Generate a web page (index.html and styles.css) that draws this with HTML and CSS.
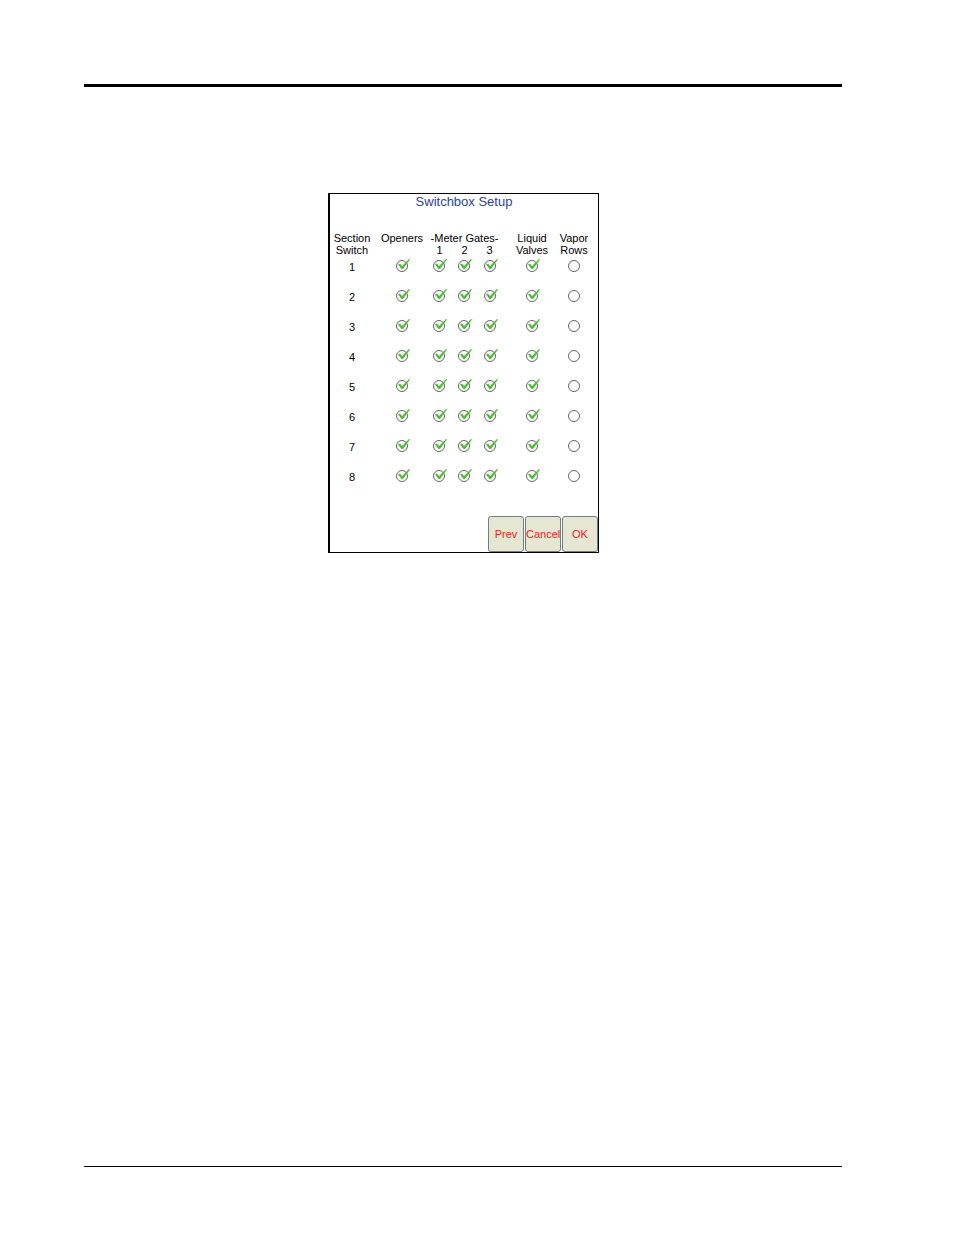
FILE: index.html
```
<!DOCTYPE html>
<html lang="en">
<head>
<meta charset="utf-8">
<title>Switchbox Setup</title>
<link rel="stylesheet" href="styles.css">
</head>
<body>
<div class="page">
  <header class="page-header"></header>
  <main class="page-body">
    <form class="panel">
      <h1 class="panel-title">Switchbox Setup</h1>
      <table class="switches">
        <colgroup>
          <col class="col-section"><col class="col-openers"><col class="col-gate"><col class="col-gate"><col class="col-gate"><col class="col-liquid"><col class="col-vapor">
        </colgroup>
        <thead>
          <tr>
            <th class="section" rowspan="2">Section<br>Switch</th>
            <th rowspan="2">Openers</th>
            <th colspan="3">-Meter Gates-</th>
            <th class="liquid" rowspan="2">Liquid<br>Valves</th>
            <th rowspan="2">Vapor<br>Rows</th>
          </tr>
          <tr><th>1</th><th>2</th><th>3</th></tr>
        </thead>
        <tbody id="rows"></tbody>
      </table>
      <div class="actions">
        <button class="action" type="button">Prev</button>
        <button class="action" type="button">Cancel</button>
        <button class="action" type="button">OK</button>
      </div>
    </form>
  </main>
  <footer class="page-footer"></footer>
</div>
<script src="rows.js"></script>
</body>
</html>
```
FILE: rows.js
```
const columns = ["Openers", "Meter gate 1", "Meter gate 2", "Meter gate 3", "Liquid valves", "Vapor rows"];
const body = document.getElementById("rows");

for (let section = 1; section <= 8; section++) {
  const row = body.insertRow();
  const head = document.createElement("th");
  head.scope = "row";
  head.className = "section";
  head.textContent = section;
  row.append(head);
  columns.forEach((name) => {
    const cell = row.insertCell();
    if (name === "Liquid valves") cell.className = "liquid";
    const box = document.createElement("input");
    box.type = "checkbox";
    box.className = "tick";
    box.defaultChecked = name !== "Vapor rows";
    box.setAttribute("aria-label", name + ", section " + section);
    cell.append(box);
  });
}
```
FILE: styles.css
```
* {
  box-sizing: border-box;
}

body {
  margin: 0;
  background: #fff;
  color: #000;
  font-family: "Liberation Sans", Arial, sans-serif;
  font-size: 11px;
  line-height: 12px;
}

.page {
  display: flex;
  flex-direction: column;
  min-height: 100vh;
  padding: 84px 112px 68px 84px;
}

.page-header {
  border-top: 3px solid #000;
}

.page-body {
  display: flex;
  flex: 1;
  justify-content: center;
  align-items: flex-start;
  padding: 106px 0 106px 1px;
}

.page-footer {
  border-top: 1px solid #000;
}

.panel {
  display: flex;
  flex-direction: column;
  border: 1px solid #000;
  border-left-width: 2px;
}

.panel-title {
  margin: 0 0 22px;
  color: #2c3f9f;
  font-size: 13px;
  font-weight: 400;
  line-height: 16px;
  text-align: center;
}

.switches {
  table-layout: fixed;
  width: 263px;
  margin-right: 5px;
  border-collapse: collapse;
}

.col-section { width: 47px; }
.col-openers { width: 50px; }
.col-gate { width: 25px; }
.col-liquid { width: 53px; }
.col-vapor { width: 38px; }

.switches th,
.switches td {
  padding: 0;
  font-weight: 400;
  text-align: center;
  vertical-align: top;
  white-space: nowrap;
}

.switches .section {
  padding-right: 3px;
}

.switches .liquid {
  padding-left: 7px;
}

.switches tbody th,
.switches tbody td {
  height: 30px;
  padding-top: 2px;
}

.switches tbody th {
  line-height: 18px;
}

.tick {
  display: block;
  width: 18px;
  height: 16px;
  margin: 0 auto;
  appearance: none;
  background: url("data:image/svg+xml,%3Csvg xmlns='http://www.w3.org/2000/svg' viewBox='0 0 18 16'%3E%3Ccircle cx='9' cy='8' r='5.5' fill='white' stroke='%23666'/%3E%3C/svg%3E") center / 18px 16px no-repeat;
}

.tick:checked {
  background-image: url("data:image/svg+xml,%3Csvg xmlns='http://www.w3.org/2000/svg' viewBox='0 0 18 16'%3E%3Ccircle cx='9' cy='8' r='5.5' fill='white' stroke='%23666'/%3E%3Cpath d='M5 6.5L7 5.5L9 8L16 1L17 1.5L10 11L8.5 11Z' fill='%234dbd35'/%3E%3C/svg%3E");
}

.actions {
  display: flex;
  justify-content: flex-end;
  gap: 1px;
  margin-top: 20px;
}

.action {
  width: 36px;
  height: 36px;
  padding: 0;
  border: 1px solid #6f7f86;
  border-radius: 3px;
  background: #e6e7d2;
  color: #ee1c25;
  font: inherit;
}
```
